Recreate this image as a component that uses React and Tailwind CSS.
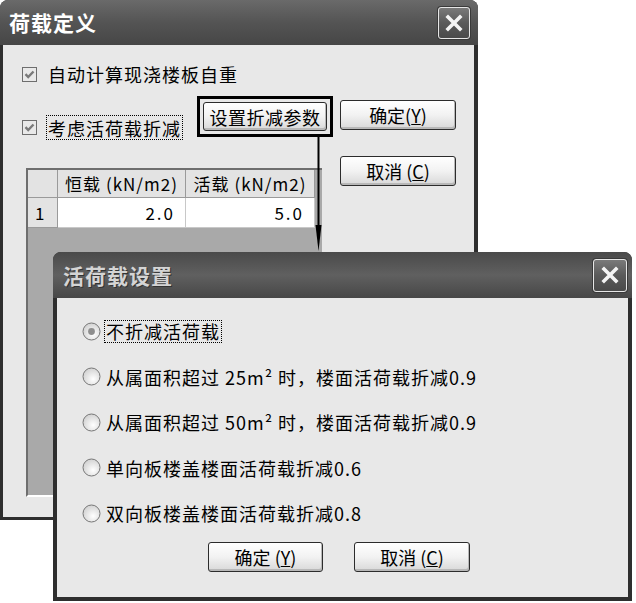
import React from "react";

function Close({ w = 32, h = 32 }) {
  return (
    <div
      className="flex items-center justify-center rounded-[3px] border border-[#e6e6e6] bg-gradient-to-b from-[#7a7a7a] via-[#5a5a5a] to-[#4a4a4a] shadow-[0_0_0_1px_#3a3a3a]"
      style={{ width: w, height: h }}
    >
      <svg width="20" height="20" viewBox="0 0 20 20">
        <path d="M4 4 L16 16 M16 4 L4 16" stroke="#f4f4f4" strokeWidth="3.6" strokeLinecap="square" />
      </svg>
    </div>
  );
}

function Check() {
  return (
    <svg width="15" height="15" viewBox="0 0 15 15" className="shrink-0">
      <rect x="0.5" y="0.5" width="14" height="14" fill="#e9e9e9" stroke="#6e6e6e" />
      <path d="M3.5 7.2 L6.2 10 L11.5 4.5" stroke="#7a7a7a" strokeWidth="2.4" fill="none" />
    </svg>
  );
}

function Radio({ sel }) {
  return (
    <svg width="19" height="19" viewBox="0 0 19 19" className="shrink-0">
      <defs>
        <radialGradient id="rg" cx="60%" cy="65%" r="70%">
          <stop offset="0%" stopColor="#ffffff" />
          <stop offset="100%" stopColor="#cfcfcf" />
        </radialGradient>
      </defs>
      <circle cx="9.5" cy="9.5" r="8.5" fill="url(#rg)" stroke="#777777" />
      {sel && <circle cx="9.5" cy="9.5" r="3.4" fill="#8e8e8e" />}
    </svg>
  );
}

function Btn({ children, className }) {
  return (
    <div
      className={`flex items-center justify-center rounded-[3px] border border-[#2c2c2c] bg-gradient-to-b from-[#ffffff] via-[#f2f2f2] to-[#d8d8d8] shadow-[inset_-1px_-2px_0_#b8b8b8] text-[18px] text-black ${className}`}
    >
      {children}
    </div>
  );
}

export default function App() {
  return (
    <div className="relative w-[636px] h-[603px] bg-white overflow-hidden font-['Noto_Sans_CJK_SC','Liberation_Sans',sans-serif] text-black leading-none">
      {/* Dialog 1 */}
      <div className="absolute left-0 top-0 w-[478px] h-[520px] flex flex-col rounded-t-[8px] bg-[#2e2e2e]">
        <div className="h-[45px] shrink-0 flex items-center justify-between pl-[9px] pr-[8px] rounded-t-[8px] bg-gradient-to-b from-[#6a6a6a] via-[#545454] to-[#464646]">
          <span className="text-white font-bold text-[21px] tracking-[1px]">荷载定义</span>
          <Close />
        </div>
        <div className="flex-1 ml-[3px] mr-[4px] mb-[3px] bg-[#e8e8e8] flex items-start pl-[19px] pt-[19px]">
          <div className="w-[311px] flex flex-col">
            <div className="h-[20px] flex items-center gap-[11px]">
              <Check />
              <span className="text-[18px] tracking-[1px]">自动计算现浇楼板自重</span>
            </div>
            <div className="mt-[12px] flex items-start">
              <div className="mt-[19px] h-[25px] flex items-center gap-[9px]">
                <Check />
                <span className="h-[25px] flex items-center border border-dotted border-black px-[1px] text-[18px] tracking-[1px]">
                  考虑活荷载折减
                </span>
              </div>
              <div className="ml-auto w-[136px] h-[41px] border-[3px] border-black p-[3px]">
                <Btn className="w-full h-full tracking-[0.5px]">设置折减参数</Btn>
              </div>
            </div>
            <div className="ml-[4px] mt-[28px] w-[296px] h-[329px] bg-[#a9a9a9] border-t-2 border-l-2 border-b-2 border-t-[#6e6e6e] border-l-[#6e6e6e] border-b-white flex flex-col">
              <div className="flex h-[28px]">
                <div className="w-[30px] bg-[#e3e3e3] border-r border-b border-r-[#9a9a9a] border-b-[#9a9a9a]" />
                <div className="w-[128px] bg-[#e3e3e3] border-r border-b border-r-[#9a9a9a] border-b-[#9a9a9a] flex items-center justify-center text-[17px] tracking-[1px]">
                  恒载 (kN/m2)
                </div>
                <div className="w-[129px] bg-[#e3e3e3] border-r border-b border-r-[#9a9a9a] border-b-[#9a9a9a] flex items-center justify-center text-[17px] tracking-[1px]">
                  活载 (kN/m2)
                </div>
              </div>
              <div className="flex h-[30px]">
                <div className="w-[30px] bg-[#e3e3e3] border-r border-b border-r-[#9a9a9a] border-b-[#9a9a9a] flex items-center pl-[7px] text-[17px]">
                  1
                </div>
                <div className="w-[128px] bg-white border-r border-b border-[#c8c8c8] flex items-center justify-end pr-[10px] text-[17px] tracking-[2px]">
                  2.0
                </div>
                <div className="w-[129px] bg-white border-r border-b border-[#c8c8c8] flex items-center justify-end pr-[10px] text-[17px] tracking-[2px]">
                  5.0
                </div>
              </div>
            </div>
          </div>
          <div className="ml-[7px] mt-[36px] flex flex-col gap-[26px]">
            <Btn className="w-[116px] h-[30px]">
              确定(<span className="underline">Y</span>)
            </Btn>
            <Btn className="w-[116px] h-[30px]">
              取消 (<span className="underline">C</span>)
            </Btn>
          </div>
        </div>
      </div>

      {/* Arrow */}
      <svg className="absolute left-[315px] top-[137px]" width="7" height="115" viewBox="0 0 7 115">
        <line x1="3.5" y1="0" x2="3.5" y2="100" stroke="#000" strokeWidth="2" />
        <polygon points="0.5,88 6.5,88 3.5,114" fill="#000" />
      </svg>

      {/* Dialog 2 */}
      <div className="absolute left-[53px] top-[252px] w-[579px] h-[349px] flex flex-col rounded-t-[8px] bg-[#2e2e2e]">
        <div className="h-[46px] shrink-0 flex items-center justify-between pl-[10px] pr-[5px] rounded-t-[8px] bg-gradient-to-b from-[#4a4a4a] via-[#606060] to-[#474747]">
          <span className="text-[#d4d4d4] font-bold text-[21px] tracking-[1px] [text-shadow:1px_1px_0_#333]">活荷载设置</span>
          <Close w={34} h={33} />
        </div>
        <div className="flex-1 ml-[4px] mr-[4px] mb-[4px] bg-[#e8e8e8] flex flex-col pl-[25px] pt-[21px]">
          <div className="flex flex-col gap-[21.5px]">
            <div className="h-[24px] flex items-center gap-[3px]">
              <Radio sel />
              <span className="h-[23px] flex items-center border border-dotted border-black px-[1px] text-[18px] tracking-[1px]">
                不折减活荷载
              </span>
            </div>
            <div className="h-[24px] flex items-center gap-[3px]">
              <Radio />
              <span className="h-[23px] flex items-center border border-transparent px-[1px] text-[18px] tracking-[1px]">
                从属面积超过 25m² 时，楼面活荷载折减0.9
              </span>
            </div>
            <div className="h-[24px] flex items-center gap-[3px]">
              <Radio />
              <span className="h-[23px] flex items-center border border-transparent px-[1px] text-[18px] tracking-[1px]">
                从属面积超过 50m² 时，楼面活荷载折减0.9
              </span>
            </div>
            <div className="h-[24px] flex items-center gap-[3px]">
              <Radio />
              <span className="h-[23px] flex items-center border border-transparent px-[1px] text-[18px] tracking-[1px]">
                单向板楼盖楼面活荷载折减0.6
              </span>
            </div>
            <div className="h-[24px] flex items-center gap-[3px]">
              <Radio />
              <span className="h-[23px] flex items-center border border-transparent px-[1px] text-[18px] tracking-[1px]">
                双向板楼盖楼面活荷载折减0.8
              </span>
            </div>
          </div>
          <div className="mt-[17px] ml-[126px] flex gap-[31px]">
            <Btn className="w-[115px] h-[30px]">
              确定 (<span className="underline">Y</span>)
            </Btn>
            <Btn className="w-[116px] h-[30px]">
              取消 (<span className="underline">C</span>)
            </Btn>
          </div>
        </div>
      </div>
    </div>
  );
}
